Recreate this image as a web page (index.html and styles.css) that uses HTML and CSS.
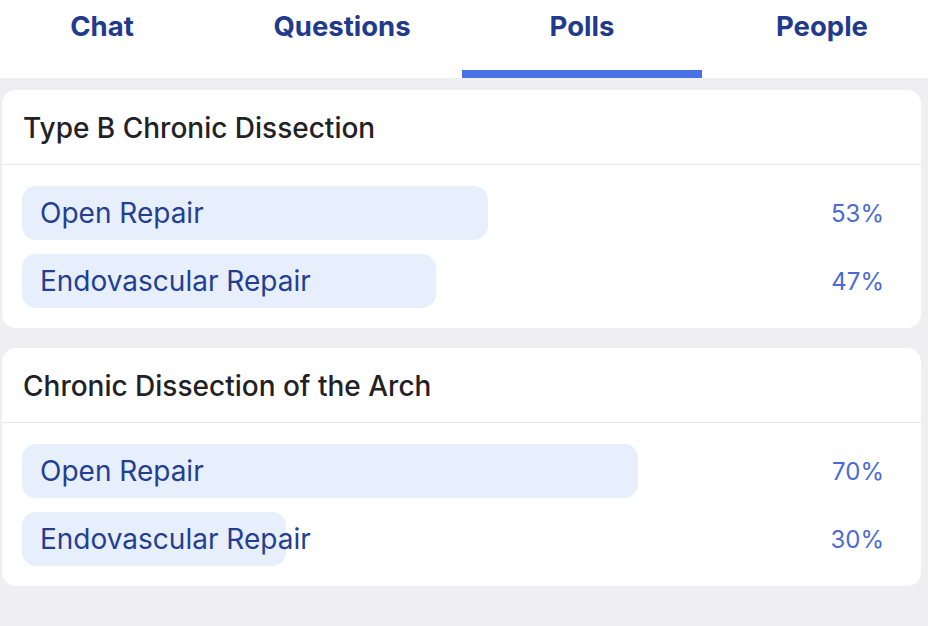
FILE: index.html
```
<!DOCTYPE html>
<html>
<head>
<meta charset="utf-8">
<link rel="stylesheet" href="styles.css">
</head>
<body>
<div class="page">
  <nav class="tabs">
    <div class="tab">Chat</div>
    <div class="tab">Questions</div>
    <div class="tab active">Polls</div>
    <div class="tab">People</div>
  </nav>
  <main class="polls">
    <section class="card">
      <div class="card-head">Type B Chronic Dissection</div>
      <div class="options">
        <div class="option">
          <div class="fill" style="width:53%"></div>
          <span class="label">Open Repair</span>
          <span class="pct">53%</span>
        </div>
        <div class="option">
          <div class="fill" style="width:47%"></div>
          <span class="label">Endovascular Repair</span>
          <span class="pct">47%</span>
        </div>
      </div>
    </section>
    <section class="card">
      <div class="card-head">Chronic Dissection of the Arch</div>
      <div class="options">
        <div class="option">
          <div class="fill" style="width:70%"></div>
          <span class="label">Open Repair</span>
          <span class="pct">70%</span>
        </div>
        <div class="option">
          <div class="fill" style="width:30%"></div>
          <span class="label">Endovascular Repair</span>
          <span class="pct">30%</span>
        </div>
      </div>
    </section>
  </main>
</div>
</body>
</html>
```
FILE: styles.css
```
html, body {
  margin: 0;
  padding: 0;
}
body {
  background: #eeeef3;
  font-family: Inter, "Noto Sans", sans-serif;
  width: 928px;
  height: 626px;
  overflow: hidden;
}
.page {
  width: 928px;
  overflow: hidden;
}
.tabs {
  display: flex;
  background: #ffffff;
  height: 78px;
  margin-left: -18px;
  width: 960px;
}
.tab {
  width: 240px;
  box-sizing: border-box;
  text-align: center;
  font-size: 27.5px;
  font-weight: 700;
  color: #213a8c;
  padding-top: 9px;
  line-height: 34px;
  border-bottom: 8px solid transparent;
}
.tab.active {
  border-bottom-color: #4a72e8;
}
.polls {
  display: flex;
  flex-direction: column;
  gap: 20px;
  padding: 12px 7px 0 2px;
}
.card {
  background: #ffffff;
  border-radius: 14px;
  padding-bottom: 20px;
}
.card-head {
  height: 75px;
  box-sizing: border-box;
  padding: 2px 20px 0 21px;
  display: flex;
  align-items: center;
  font-size: 28px;
  font-weight: 500;
  color: #222226;
  border-bottom: 1px solid #e8e8ee;
}
.options {
  display: flex;
  flex-direction: column;
  gap: 14px;
  padding: 21px 19px 0 20px;
}
.option {
  position: relative;
  height: 54px;
  display: flex;
  align-items: center;
  justify-content: space-between;
  padding: 0 18px;
}
.fill {
  position: absolute;
  left: 0;
  top: 0;
  bottom: 0;
  background: #e7effd;
  border-radius: 14px;
}
.label {
  position: relative;
  font-size: 28px;
  font-weight: 400;
  color: #243f91;
}
.pct {
  position: relative;
  font-size: 24px;
  color: #4a6ad8;
}
```
